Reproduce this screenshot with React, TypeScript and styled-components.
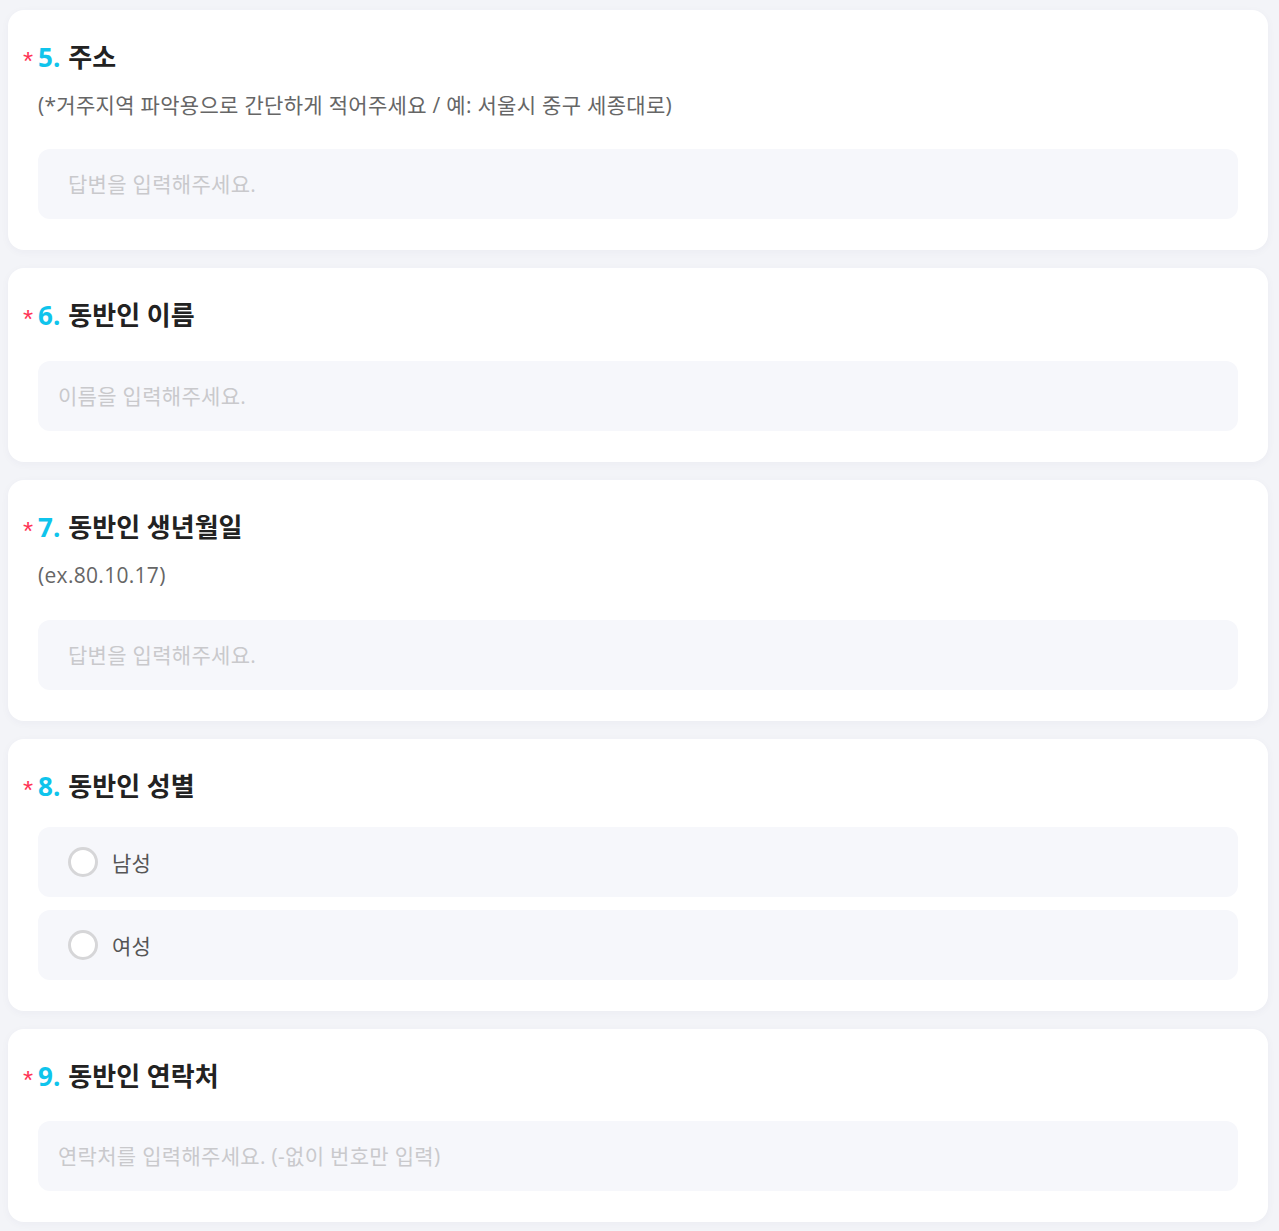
import React from "react";
import styled, { createGlobalStyle } from "styled-components";

const Global = createGlobalStyle`
  html, body { margin: 0; padding: 0; background: #f3f4f8; }
  body { font-family: "Open Sans", "Noto Sans CJK KR", sans-serif; }
  * { box-sizing: border-box; }
`;

const Page = styled.div`
  display: flex;
  flex-direction: column;
  gap: 18px;
  padding: 10px 11px 10px 8px;
`;

const Card = styled.section`
  background: #fff;
  border-radius: 16px;
  box-shadow: 0 2px 8px rgba(40, 50, 90, 0.04);
  padding: 30px 30px 31px 30px;
  display: flex;
  flex-direction: column;
`;

const Title = styled.h2`
  position: relative;
  margin: 0;
  height: 34px;
  display: flex;
  align-items: center;
  font-size: 26px;
  line-height: 34px;
  font-weight: 700;
  color: #222;
  letter-spacing: 0;
`;

const Star = styled.span`
  position: absolute;
  left: -15px;
  top: 8px;
  line-height: 26px;
  color: #ff3355;
  font-family: "Liberation Sans", sans-serif;
  font-size: 26px;
  font-weight: 400;
`;

const Num = styled.span`
  color: #0fc4ec;
  font-family: "Open Sans", "Noto Sans", sans-serif;
  font-size: 26px;
  line-height: 34px;
  margin-right: 8px;
`;

const Desc = styled.p`
  margin: 16px 0 0;
  height: 30px;
  font-size: 21px;
  line-height: 30px;
  color: #666;
  letter-spacing: 0.3px;
`;

const Input = styled.input<{ $pad: number; $top: number }>`
  margin-top: ${(p) => p.$top}px;
  height: 70px;
  width: 100%;
  border: none;
  outline: none;
  border-radius: 12px;
  background: #f6f7fb;
  padding: 0 ${(p) => p.$pad}px;
  font-family: inherit;
  font-size: 21px;
  color: #333;
  letter-spacing: 0.3px;
  &::placeholder { color: #c9c9cc; }
`;

const Options = styled.div`
  margin-top: 24px;
  display: flex;
  flex-direction: column;
  gap: 13px;
`;

const Option = styled.label`
  display: flex;
  align-items: center;
  gap: 14px;
  height: 70px;
  padding: 0 30px;
  border-radius: 12px;
  background: #f6f7fb;
  font-size: 21px;
  color: #555;
  letter-spacing: 0.3px;
  cursor: pointer;
`;

const Radio = styled.span`
  width: 30px;
  height: 30px;
  border-radius: 50%;
  border: 3px solid #d6d6d8;
  background: #fff;
  flex: none;
`;

function Head({ n, text }: { n: number; text: string }) {
  return (
    <Title>
      <Star>*</Star>
      <Num>{n}.</Num>
      <span>{text}</span>
    </Title>
  );
}

export default function App() {
  return (
    <>
      <Global />
      <Page>
        <Card>
          <Head n={5} text="주소" />
          <Desc>(*거주지역 파악용으로 간단하게 적어주세요 / 예: 서울시 중구 세종대로)</Desc>
          <Input $pad={30} $top={29} placeholder="답변을 입력해주세요." />
        </Card>
        <Card>
          <Head n={6} text="동반인 이름" />
          <Input $pad={20} $top={29} placeholder="이름을 입력해주세요." />
        </Card>
        <Card>
          <Head n={7} text="동반인 생년월일" />
          <Desc>(ex.80.10.17)</Desc>
          <Input $pad={30} $top={30} placeholder="답변을 입력해주세요." />
        </Card>
        <Card>
          <Head n={8} text="동반인 성별" />
          <Options>
            <Option><Radio />남성</Option>
            <Option><Radio />여성</Option>
          </Options>
        </Card>
        <Card>
          <Head n={9} text="동반인 연락처" />
          <Input $pad={20} $top={28} placeholder="연락처를 입력해주세요. (-없이 번호만 입력)" />
        </Card>
      </Page>
    </>
  );
}
